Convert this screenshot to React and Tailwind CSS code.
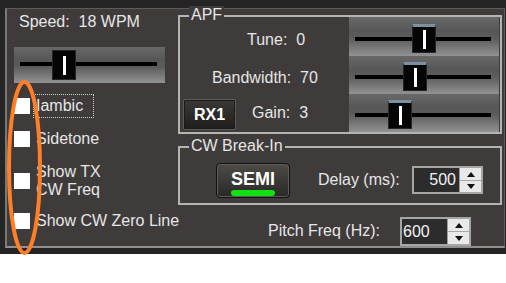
import React from "react";

function Slider({ className, trackClass, thumbClass, thumbLeft }) {
  return (
    <div
      className={`relative shrink-0 bg-[linear-gradient(to_bottom,#686868_0%,#575757_35%,#5c5c5c_55%,#929292_100%)] ${className}`}
    >
      <div className={`absolute left-[6px] right-[8px] h-[4px] bg-black ${trackClass}`} />
      <div
        className={`absolute w-[24px] bg-[#050505] border border-[#262626] flex items-center justify-center ${thumbClass}`}
        style={{ left: thumbLeft }}
      >
        <div className="w-[3px] h-[19px] bg-white" />
      </div>
    </div>
  );
}

function Check({ className }) {
  return <div className={`w-[16px] h-[16px] bg-white shrink-0 ${className || ""}`} />;
}

function Spinner() {
  return (
    <div className="w-[22px] shrink-0 flex flex-col bg-[#e9e9e9] border-l border-[#9c9c9c]">
      <div className="flex-1 flex items-center justify-center border-b border-[#a8a8a8]">
        <svg width="8" height="5" viewBox="0 0 8 5">
          <polygon points="4,0 8,5 0,5" fill="#111" />
        </svg>
      </div>
      <div className="flex-1 flex items-center justify-center">
        <svg width="8" height="5" viewBox="0 0 8 5">
          <polygon points="0,0 8,0 4,5" fill="#111" />
        </svg>
      </div>
    </div>
  );
}

export default function App() {
  return (
    <div className="relative w-[506px] h-[283px] bg-white font-['Liberation_Sans',Arial,sans-serif] text-[16px] leading-[18px] text-[#e6e6e6] overflow-hidden">
      <div className="h-[254px] bg-[#252525] pt-[8px] pl-[5px] pr-[1px] pb-[6px]">
        <div className="h-full flex bg-[#3f3b3b] border-l-2 border-t border-b-2 border-r border-l-[#7a7a7a] border-t-[#5c5c5c] border-b-[#909090] border-r-[#5c5c5c]">
          {/* Left column */}
          <div className="w-[171px] shrink-0 flex flex-col">
            <div className="ml-[12px] mt-[4px] whitespace-pre">Speed:  18 WPM</div>
            <Slider
              className="ml-[7px] mt-[16px] w-[151px] h-[36px]"
              trackClass="top-[15px]"
              thumbClass="top-[3px] h-[30px]"
              thumbLeft={38}
            />
            <div className="ml-[7px] mt-[11px] h-[24px] flex items-center">
              <Check />
              <div className="ml-[3px] h-[24px] w-[61px] border border-dotted border-[#d0d0d0] pl-[2px] flex items-center">
                Iambic
              </div>
            </div>
            <div className="ml-[7px] mt-[9px] h-[24px] flex items-center">
              <Check />
              <div className="ml-[6px]">Sidetone</div>
            </div>
            <div className="ml-[7px] mt-[12px] h-[36px] flex items-center">
              <Check />
              <div className="ml-[6px]">
                <div>Show TX</div>
                <div>CW Freq</div>
              </div>
            </div>
            <div className="ml-[7px] mt-[10px] h-[24px] flex items-center">
              <Check />
              <div className="ml-[6px] whitespace-nowrap">Show CW Zero Line</div>
            </div>
          </div>

          {/* Right column */}
          <div className="flex-1 flex flex-col mr-[2px]">
            {/* APF */}
            <div className="relative mt-[6px] h-[122px] border-2 border-[#b4b4b4] flex flex-col">
              <div className="absolute left-[9px] top-[-11px] px-[2px] bg-[#3f3b3b]">APF</div>
              <div className="h-[39px] flex">
                <div className="w-[169px] shrink-0">
                  <div className="ml-[67px] mt-[14px] whitespace-pre">Tune:  0</div>
                </div>
                <Slider
                  className="w-[150px] h-full"
                  trackClass="top-[20px]"
                  thumbClass="top-[7px] h-[29px] border-t-[3px] border-t-[#7d8fa1]"
                  thumbLeft={63}
                />
              </div>
              <div className="h-[38px] flex">
                <div className="w-[169px] shrink-0">
                  <div className="ml-[32px] mt-[13px] whitespace-pre">Bandwidth:  70</div>
                </div>
                <Slider
                  className="w-[150px] h-full"
                  trackClass="top-[19px]"
                  thumbClass="top-[6px] h-[29px] border-t-[3px] border-t-[#7d8fa1]"
                  thumbLeft={54}
                />
              </div>
              <div className="h-[38px] flex">
                <div className="w-[169px] shrink-0 flex items-start">
                  <div className="ml-[3px] mt-[5px] w-[53px] h-[31px] rounded-[2px] border border-[#5e5c58] bg-[linear-gradient(to_bottom,#3b3935,#1f1d1b)] shadow-[inset_0_0_0_1px_#1a1a1a] flex items-center justify-center font-bold text-white">
                    RX1
                  </div>
                  <div className="ml-[16px] mt-[10px] whitespace-pre">Gain:  3</div>
                </div>
                <Slider
                  className="w-[150px] h-full"
                  trackClass="top-[19px]"
                  thumbClass="top-[6px] h-[29px] border-t-[3px] border-t-[#7d8fa1]"
                  thumbLeft={39}
                />
              </div>
            </div>

            {/* CW Break-In */}
            <div className="relative mt-[12px] h-[60px] border-2 border-[#b4b4b4] flex items-start">
              <div className="absolute left-[9px] top-[-11px] px-[2px] bg-[#3f3b3b] whitespace-nowrap">CW Break-In</div>
              <div className="ml-[36px] mt-[15px] w-[74px] h-[35px] rounded-[4px] border border-[#111] bg-[linear-gradient(to_bottom,#4d4b46,#3a3834_55%,#2a2825)] shadow-[inset_0_0_0_1px_#5e5c57] flex flex-col items-center pt-[5px]">
                <div className="text-[18px] leading-[20px] font-bold text-white">SEMI</div>
                <div className="mt-[1px] w-[44px] h-[6px] rounded-full bg-[#12e012]" />
              </div>
              <div className="ml-[28px] mt-[23px] w-[94px] shrink-0 whitespace-nowrap">Delay (ms):</div>
              <div className="mt-[18px] w-[71px] h-[28px] flex border-2 border-[#a6a6a6] bg-[#2c2c2c]">
                <div className="flex-1 flex items-center justify-end pr-[3px] text-[#f2f2f2]">500</div>
                <Spinner />
              </div>
            </div>

            {/* Pitch */}
            <div className="relative z-10 mt-[12px] h-[29px] flex items-start">
              <div className="ml-[90px] mt-[5px] w-[132px] shrink-0 whitespace-nowrap">Pitch Freq (Hz):</div>
              <div className="w-[71px] h-[29px] flex border-2 border-[#a6a6a6] bg-[#2c2c2c]">
                <div className="flex-1 flex items-center pl-[1px] text-[#f2f2f2]">600</div>
                <Spinner />
              </div>
            </div>
          </div>
        </div>
      </div>

      {/* Orange annotation ellipse */}
      <svg className="absolute left-0 top-0 pointer-events-none" width="506" height="283" viewBox="0 0 506 283">
        <ellipse cx="24.5" cy="167.5" rx="15.5" ry="85.5" fill="none" stroke="#ff7f27" strokeWidth="4" />
      </svg>
    </div>
  );
}
